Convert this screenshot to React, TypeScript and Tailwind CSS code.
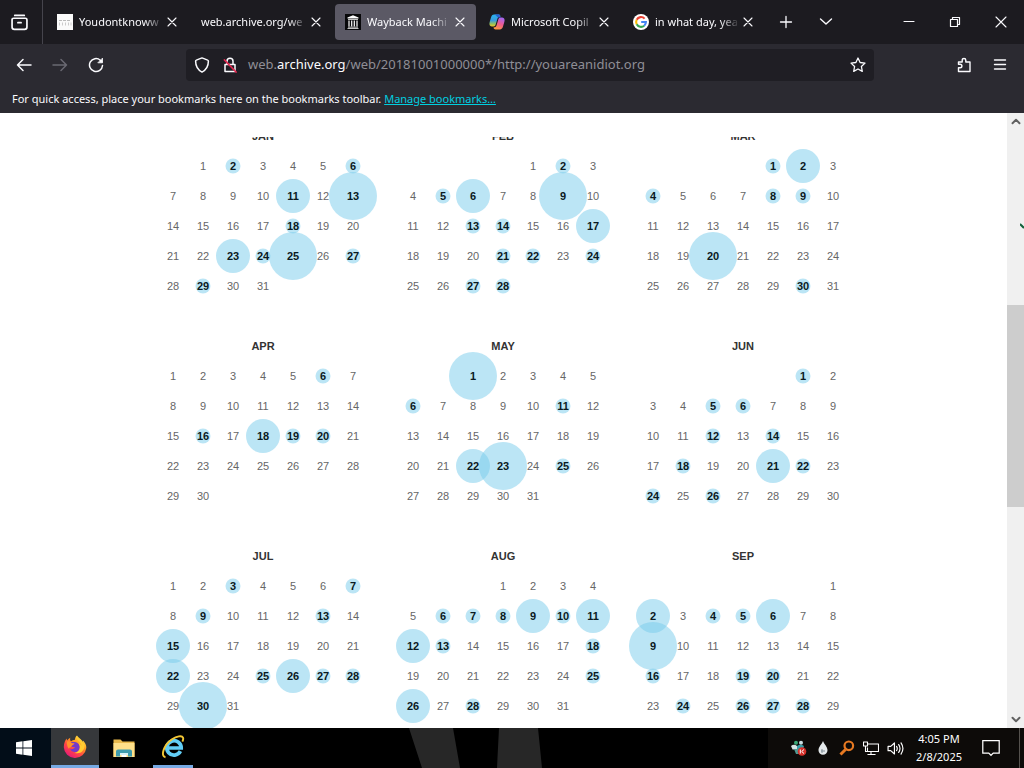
import React from "react";
import type { ReactNode } from "react";

type Size = "s" | "m" | "l";

interface Month {
  name: string;
  start: number;
  days: number;
  s: number[];
  m: number[];
  l: number[];
}

const months: Month[] = [
  { name: "JAN", start: 1, days: 31, s: [2, 6, 18, 24, 27, 29], m: [11, 23], l: [13, 25] },
  { name: "FEB", start: 4, days: 28, s: [2, 5, 13, 14, 21, 22, 24, 27, 28], m: [6, 17], l: [9] },
  { name: "MAR", start: 4, days: 31, s: [1, 4, 8, 9, 30], m: [2], l: [20] },
  { name: "APR", start: 0, days: 30, s: [6, 16, 19, 20], m: [18], l: [] },
  { name: "MAY", start: 2, days: 31, s: [6, 11, 25], m: [22], l: [1, 23] },
  { name: "JUN", start: 5, days: 30, s: [1, 5, 6, 12, 14, 18, 22, 24, 26], m: [21], l: [] },
  { name: "JUL", start: 0, days: 31, s: [3, 7, 9, 13, 25, 27, 28], m: [15, 22, 26], l: [30] },
  { name: "AUG", start: 3, days: 31, s: [6, 7, 8, 10, 13, 18, 25, 28], m: [9, 11, 12, 26], l: [] },
  { name: "SEP", start: 6, days: 30, s: [4, 5, 16, 19, 20, 24, 26, 27, 28], m: [2, 6], l: [9] },
];

const circle: Record<Size, string> = {
  s: "size-[15px]",
  m: "size-[34px]",
  l: "size-12",
};

function Day({ day, size }: { day: number; size?: Size }) {
  if (!size) return <span className="relative z-0">{day}</span>;
  return (
    <a href={"#" + day} className="flex h-[30px] items-center justify-center font-bold text-[#0a1a22]">
      <span
        className={
          "pointer-events-none absolute top-1/2 left-1/2 -translate-x-1/2 -translate-y-1/2 rounded-full bg-[#77ccec]/50 " +
          circle[size]
        }
      />
      <span className="relative z-10">{day}</span>
    </a>
  );
}

function MonthTable({ month }: { month: Month }) {
  const weeks = Math.ceil((month.start + month.days) / 7);
  const sizeOf = (d: number): Size | undefined =>
    month.l.includes(d) ? "l" : month.m.includes(d) ? "m" : month.s.includes(d) ? "s" : undefined;
  return (
    <table className="w-[210px] table-fixed border-collapse self-start text-center text-[11px] text-[#666]">
      <caption className="h-[30px] text-[11px] leading-[30px] font-bold text-[#333]">{month.name}</caption>
      <tbody>
        {Array.from({ length: weeks }, (_, w) => (
          <tr key={w}>
            {Array.from({ length: 7 }, (_, c) => {
              const d = w * 7 + c - month.start + 1;
              return (
                <td key={c} className="relative h-[30px] p-0 align-middle leading-4">
                  {d > 0 && d <= month.days && <Day day={d} size={sizeOf(d)} />}
                </td>
              );
            })}
          </tr>
        ))}
      </tbody>
    </table>
  );
}

function Line({ children, className = "size-4", width = 1.3 }: { children: ReactNode; className?: string; width?: number }) {
  return (
    <svg viewBox="0 0 16 16" className={className} fill="none" stroke="currentColor" strokeWidth={width} strokeLinecap="round" strokeLinejoin="round" aria-hidden="true">
      {children}
    </svg>
  );
}

const PageIcon = () => (
  <svg viewBox="0 0 16 16" className="size-4 shrink-0" aria-hidden="true">
    <rect width="16" height="16" fill="#fbfbfb" />
    <path d="M2 6.500h12" stroke="#bbb" strokeDasharray="3 1" />
    <path d="M2.500 8.500v3M5.500 8.500v3M8.500 8.500v3M11.500 8.500v3M14 8.500v3" stroke="#ccc" />
  </svg>
);

const ArchiveIcon = () => (
  <svg viewBox="0 0 16 16" className="size-4 shrink-0" aria-hidden="true">
    <rect width="16" height="16" fill="#08080a" />
    <path d="M8 1.200 13.500 3.600v1h-11v-1zM3 5.200h10v.8H3zM3 12.800h10v.8H3zM2.500 14.200h11v.8h-11z" fill="#fff" />
    <path d="M4 6.500v6M6.700 6.500v6M9.300 6.500v6M12 6.500v6" stroke="#fff" strokeWidth="1.200" />
  </svg>
);

const CopilotIcon = () => (
  <svg viewBox="0 0 16 16" className="size-4 shrink-0" aria-hidden="true">
    <defs>
      <linearGradient id="cpl" x1="0" y1="0" x2="0" y2="1">
        <stop offset="0" stopColor="#28b3ee" />
        <stop offset=".5" stopColor="#3b9bdc" />
        <stop offset=".8" stopColor="#9ac455" />
        <stop offset="1" stopColor="#f5c32c" />
      </linearGradient>
      <linearGradient id="cpr" x1=".7" y1="0" x2=".3" y2="1">
        <stop offset="0" stopColor="#a267f2" />
        <stop offset=".5" stopColor="#ee5a91" />
        <stop offset="1" stopColor="#ff9a3d" />
      </linearGradient>
    </defs>
    <path d="M11.500 2.500C11.200 1 10.400.6 9.500.6H5.200C3.400.6 2.500 1.700 2 3.500L.7 8c-.8 2.900.2 4.500 2.300 4.500h1.500c1.200 0 1.900-.8 2.200-2L8.500 4.500c.4-1.300 1.300-2 3-2z" fill="url(#cpl)" />
    <path d="M4.500 13.500c.3 1.500 1.100 1.900 2 1.900h4.300c1.800 0 2.700-1.100 3.200-2.900L15.300 8c.8-2.900-.2-4.500-2.300-4.500h-1.500c-1.200 0-1.900.8-2.200 2l-1.800 6c-.4 1.300-1.300 2-3 2z" fill="url(#cpr)" />
    <path d="M5.500.6h4c.9 0 1.700.4 2 2.900H9.600C8 3.500 7.400 1.500 5.500.6z" fill="#2a5fd0" />
  </svg>
);

const GoogleIcon = () => (
  <svg viewBox="0 0 16 16" className="size-4 shrink-0" aria-hidden="true">
    <circle cx="8" cy="8" r="8" fill="#fff" />
    <g fill="none" strokeWidth="2.100">
      <path d="M11.600 4.600A4.900 4.900 0 0 0 3.700 5.700" stroke="#ea4335" />
      <path d="M3.700 5.700a4.900 4.900 0 0 0 0 4.600" stroke="#fbbc05" />
      <path d="M3.700 10.300a4.900 4.900 0 0 0 7.500 1.400" stroke="#34a853" />
      <path d="M11.200 11.700A4.900 4.900 0 0 0 12.900 8H8.200" stroke="#4285f4" />
    </g>
  </svg>
);

const tabs: { title: string; icon?: ReactNode; active?: boolean }[] = [
  { title: "Youdontknoww", icon: <PageIcon /> },
  { title: "web.archive.org/we" },
  { title: "Wayback Machi", icon: <ArchiveIcon />, active: true },
  { title: "Microsoft Copil", icon: <CopilotIcon /> },
  { title: "in what day, yea", icon: <GoogleIcon /> },
];

function TabBar() {
  return (
    <header className="flex h-11 shrink-0 items-center bg-[#1c1b20] text-[#fbfbfe]">
      <button aria-label="Firefox View" className="flex h-full w-[43px] shrink-0 items-center justify-center border-r border-[#45444c] pr-1">
        <Line className="size-[17px]" width={1.600}>
          <path d="M3.500 1.300h9M2.500 4h11a1.500 1.500 0 0 1 1.500 1.500v6.800a2.200 2.200 0 0 1-2.200 2.200H3.200A2.200 2.200 0 0 1 1 12.300V5.500A1.500 1.500 0 0 1 2.500 4zM6.500 8.200h3" />
        </Line>
      </button>
      <div role="tablist" className="flex gap-[3px] pl-1">
        {tabs.map((t) => (
          <div
            key={t.title}
            className={"flex h-9 w-[141px] items-center rounded-sm pr-2 pl-2.5 " + (t.active ? "bg-[#5b5965]" : "")}
          >
            <button role="tab" aria-selected={!!t.active} className="flex min-w-0 flex-1 items-center gap-1.5 text-[11px]">
              {t.icon}
              <span className="min-w-0 flex-1 text-left whitespace-nowrap [mask-image:linear-gradient(to_left,transparent,black_20px)]">
                {t.title}
              </span>
            </button>
            <button aria-label={"Close " + t.title} className="shrink-0">
              <Line width={1.100}>
                <path d="m4 4 8 8M12 4l-8 8" />
              </Line>
            </button>
          </div>
        ))}
      </div>
      <button aria-label="New tab" className="ml-1 flex h-9 w-9 shrink-0 items-center justify-center">
        <Line width={1.300}>
          <path d="M8 2.500v11M2.500 8h11" />
        </Line>
      </button>
      <button aria-label="List all tabs" className="ml-1 flex h-9 w-9 shrink-0 items-center justify-center">
        <Line width={1.400}>
          <path d="m2.500 5 5.500 5 5.500-5" />
        </Line>
      </button>
      <div className="ml-auto flex h-full">
        <button aria-label="Minimize" className="flex w-[46px] items-center justify-center">
          <Line width={1.100}>
            <path d="M3 7.500h10" />
          </Line>
        </button>
        <button aria-label="Restore" className="flex w-[46px] items-center justify-center">
          <Line width={1.200}>
            <path d="M3.500 5.500h7v7h-7zM5.500 5.500v-2h7v7h-2" />
          </Line>
        </button>
        <button aria-label="Close window" className="flex w-[46px] items-center justify-center">
          <Line width={1.100}>
            <path d="m3 3 10 10M13 3 3 13" />
          </Line>
        </button>
      </div>
    </header>
  );
}

function NavBar() {
  return (
    <nav className="flex h-[41px] shrink-0 items-center bg-[#2b2a31] px-2 text-[#fbfbfe]">
      <button aria-label="Back" className="flex size-8 items-center justify-center">
        <Line width={1.500}>
          <path d="M15 8H1.500M7 2.500 1.500 8 7 13.500" />
        </Line>
      </button>
      <button aria-label="Forward" disabled className="ml-1 flex size-8 items-center justify-center text-[#6a6972]">
        <Line width={1.500}>
          <path d="M1 8h13.500M9 2.500 14.500 8 9 13.500" />
        </Line>
      </button>
      <button aria-label="Reload" className="ml-1 flex size-8 items-center justify-center">
        <Line width={1.500}>
          <path d="M14.500 8.500A6.500 6.500 0 1 1 12.300 3.200l1.500 1.500" />
          <path d="M14.500 1.500v4.300h-4.300z" fill="currentColor" strokeWidth=".8" />
        </Line>
      </button>
      <div className="mr-[78px] ml-[74px] flex h-8 flex-1 items-center rounded-sm bg-[#1f1e24] px-2">
        <button aria-label="Tracking protection">
          <Line width={1.500}>
            <path d="M8 .9 2.300 3.100a1 1 0 0 0-.7 1c0 5.200 2 8.800 6.400 11 4.400-2.200 6.400-5.800 6.400-11a1 1 0 0 0-.7-1z" />
          </Line>
        </button>
        <button aria-label="Connection not secure" className="ml-3">
          <Line width={1.500}>
            <path d="M3 7.500h10v7H3zM5 7.500V4.300a3 3 0 0 1 6 0v3.200" />
            <path d="m2.500 3 11.500 12" stroke="#e22850" strokeWidth="1.800" />
          </Line>
        </button>
        <div className="ml-2.5 flex-1 text-[13px] whitespace-nowrap text-[#8f8e96]">
          web.<span className="text-[#fbfbfe]">archive.org</span>/web/20181001000000*/http://youareanidiot.org
        </div>
        <button aria-label="Bookmark this page">
          <Line width={1.300}>
            <path d="m8 1 2.100 4.500 4.900.6-3.600 3.400.9 4.900L8 12l-4.300 2.400.9-4.900L1 6.100l4.900-.6z" />
          </Line>
        </button>
      </div>
      <button aria-label="Extensions" className="flex w-6 items-center justify-center">
        <Line width={1.400}>
          <path d="M2.500 5h3.700V3.300a1.800 1.800 0 0 1 3.600 0V5h4.200v9.500H2.500v-3.700h1.600a1.800 1.800 0 0 0 0-3.600H2.500z" />
        </Line>
      </button>
      <button aria-label="Menu" className="ml-2 flex size-8 items-center justify-center">
        <Line width={1.400}>
          <path d="M2.500 3h11M2.500 7.500h11M2.500 12h11" />
        </Line>
      </button>
    </nav>
  );
}

function ScrollBar() {
  return (
    <div className="relative flex w-[17px] shrink-0 flex-col bg-[#f0f0f0] text-[#606060]" aria-hidden="true">
      <Line className="mx-auto h-[17px] w-3.5" width={2.200}>
        <path d="m4 10 4-4 4 4" />
      </Line>
      <div className="grow-[175] basis-0" />
      <div className="grow-[202] basis-0 bg-[#cdcdcd]" />
      <div className="grow-[204] basis-0" />
      <Line className="mx-auto h-[17px] w-3.5" width={2.200}>
        <path d="m4 6 4 4 4-4" />
      </Line>
      <svg viewBox="0 0 4 6" className="absolute top-[110px] right-0 h-1.5 w-1">
        <path d="m0 1 4 4" stroke="#12603a" strokeWidth="2" />
      </svg>
    </div>
  );
}

const FirefoxIcon = () => (
  <svg viewBox="0 0 24 24" className="size-6" aria-hidden="true">
    <defs>
      <linearGradient id="ff" x1=".85" y1=".05" x2=".2" y2=".95">
        <stop offset="0" stopColor="#fff44f" />
        <stop offset=".35" stopColor="#ff9a1f" />
        <stop offset=".65" stopColor="#ff4545" />
        <stop offset="1" stopColor="#e6187a" />
      </linearGradient>
    </defs>
    <path d="M22.500 9c-.6-1.500-1.800-3-2.800-3.500.4 1 .5 1.800.5 2.300C18.800 4 15.500 3 14 .5c-1.700 1.300-2 3-2 4.200-1.600.1-3 .7-4 1.600C6.800 5.300 7 3.400 7.300 2.700 5.500 3.500 4.700 4.800 4.100 5.500c-.3-.4-.4-1.300-.3-2C2.400 4.900.8 8 .8 12.200A11.300 11.300 0 0 0 23.300 13c.1-1.400-.2-2.800-.8-4z" fill="url(#ff)" />
    <path d="M7.500 7.500c2-.6 5.500-.8 7.600 1 2.600 2.300 2.200 6.400-.5 8-2.700 1.500-6.700.3-7.400-2.700 2.200 1 3.800-.4 4.900-1.200-.8-.7-3.200-.2-4.900-1.300-.8-.7-.7-2.700.3-3.800z" fill="#7339c9" />
    <path d="M4 6.500c1.800-.6 3.700.2 4.300 1.200.8.5 2 .5 3.200.6-.3 1.500-2.600 1.700-2.900 3-.4 1.700-2.200.7-2.900 2.500C4 11.500 3.600 8.500 4 6.500z" fill="#ff922a" />
    <path d="M14 1c-1.500 3.500 3.900 5 4.500 10-.7-1.700-2-2.500-3-3 3 4.500.5 9.500-4 9.800 5.500 2 10.500-2 10-8C20 5.500 16 4.500 14 1z" fill="#ffcb32" />
  </svg>
);

const FolderIcon = () => (
  <svg viewBox="0 0 24 24" className="size-6" aria-hidden="true">
    <path d="M1.500 3.500h7l2 2h12V21h-21z" fill="#e9b94c" />
    <path d="M1.500 7h21v14h-21z" fill="#ffe08a" />
    <path d="M4 20.500v-5a2 2 0 0 1 2-2h12a2 2 0 0 1 2 2v5h-4V17H8v3.500z" fill="#3f9cae" />
    <path d="M8 17h8v2H8z" fill="#d5f0f6" />
    <path d="M9.500 19h5v2h-5z" fill="#fff" />
  </svg>
);

const ExplorerIcon = () => (
  <svg viewBox="0 0 24 24" className="size-6" aria-hidden="true">
    <path d="M19.400 16.200A7.200 7.200 0 1 1 20.200 13H7" fill="none" stroke="#62cdf5" strokeWidth="3.700" />
    <path d="M4.500 22.300C-.8 21.500 2.500 10 11 4.300c4.700-3.200 10-4.200 11-1.700.5 1.200.1 2.600-.6 4" fill="none" stroke="#f3c735" strokeWidth="1.900" />
  </svg>
);

function TaskBar() {
  return (
    <footer className="relative flex h-10 shrink-0 items-stretch overflow-hidden bg-black text-white">
      <svg viewBox="0 0 150 40" className="absolute top-0 left-[404px] h-10 w-[150px]" aria-hidden="true">
        <path d="M5 0h44l7 40H18zM95 0h39l4 40H93z" fill="#272727" />
      </svg>
      <button aria-label="Start" className="flex w-[51px] items-center justify-center bg-[#020d18] pr-1">
        <svg viewBox="0 0 16 16" className="size-4" fill="#fff" aria-hidden="true">
          <path d="M0 2.200 6.500 1.300v6.300H0zM7.300 1.200 16 0v7.600H7.300zM0 8.400h6.500v6.300L0 13.800zM7.300 8.400H16V16l-8.700-1.200z" />
        </svg>
      </button>
      <button aria-label="Firefox" className="flex w-12 items-center justify-center border-b-[3px] border-[#76a9e3] bg-[#36383b]">
        <FirefoxIcon />
      </button>
      <button aria-label="File Explorer" className="flex w-[50px] items-center justify-center">
        <FolderIcon />
      </button>
      <button aria-label="Internet Explorer" className="ml-1 flex w-10 items-center justify-center border-b-[3px] border-[#76a9e3]">
        <ExplorerIcon />
      </button>
      <div className="ml-auto flex items-center bg-[#0d0b09] pl-[23px]">
        <div className="flex items-center gap-2">
          <svg viewBox="0 0 16 16" className="size-4" aria-hidden="true">
            <circle cx="5" cy="2.800" r="2" fill="#3aa877" />
            <circle cx="10" cy="2.800" r="2" fill="#c9dfe3" />
            <path d="M0 6q3-2.500 6 0v3.500H1.500z" fill="#d7e5e4" />
            <path d="M6 6q3.500-2.500 7 0l-1 3.500H6z" fill="#379ea7" />
            <path d="M3 9h5v5H5z" fill="#4e9a94" />
            <circle cx="11" cy="11.500" r="4.300" fill="#d5302a" />
            <path d="M9.300 9.500v4M13 9.500l-2.300 2 2.300 2" stroke="#fff" fill="none" />
          </svg>
          <svg viewBox="0 0 16 16" className="size-4" aria-hidden="true">
            <path d="M8 1c1.300 3.500 4.500 5.700 4.500 9.200a4.500 4.500 0 0 1-9 0C3.500 6.700 6.700 4.500 8 1z" fill="#e4e9eb" />
            <path d="M6 11h4M7 9v4" stroke="#829098" />
          </svg>
          <svg viewBox="0 0 16 16" className="size-4" fill="none" stroke="#e87a22" aria-hidden="true">
            <circle cx="9.800" cy="5.800" r="4.300" strokeWidth="2.200" />
            <path d="M6.500 9.500 1.500 14.500" strokeWidth="3" />
          </svg>
          <Line width={1.100}>
            <path d="M5.500 4h10v7.500h-11V8M8 11.500v3M5 14.500h7M.5 2h4v4h-4zM2.500 6v5.500h2" strokeLinecap="square" />
          </Line>
          <Line className="size-[17px]" width={1.100}>
            <path d="M1 6h2.500L7 2.800v10.400L3.500 10H1zM9 6q1.300 2 0 4M11 4.300q2.500 3.700 0 7.400M13.200 2.700q3.600 5.300 0 10.600" />
          </Line>
        </div>
        <div className="ml-2 flex w-[54px] flex-col items-center text-[11px] leading-[18px] whitespace-nowrap">
          <time>4:05 PM</time>
          <time>2/8/2025</time>
        </div>
        <button aria-label="Notifications" className="ml-3 flex h-full items-center px-1">
          <Line className="size-[18px]" width={1.100}>
            <path d="M.7 1.500h14.600v11H10l-2 2-2-2H.7z" strokeLinejoin="miter" />
          </Line>
        </button>
        <div className="ml-[15px] h-full w-[5px] border-l border-[#55524e]" />
      </div>
    </footer>
  );
}

export default function App() {
  return (
    <div className="flex h-screen flex-col overflow-hidden bg-white font-['Noto_Sans','Open_Sans',sans-serif]">
      <TabBar />
      <NavBar />
      <div className="h-7 shrink-0 bg-[#2b2a31] px-3 text-[11px] leading-7 text-[#fbfbfe]">
        For quick access, place your bookmarks here on the bookmarks toolbar.{" "}
        <a href="#bookmarks" className="text-[#00cfe0] underline">
          Manage bookmarks…
        </a>
      </div>
      <div className="flex min-h-0 flex-1">
        <main className="flex min-w-0 flex-1 flex-col bg-white pt-6 pr-px font-['Liberation_Sans',Arial,sans-serif]">
          <div className="min-h-0 flex-1 overflow-hidden">
            <div className="-mt-4 grid grid-cols-[repeat(3,210px)] justify-center gap-[30px]">
              {months.map((m) => (
                <MonthTable key={m.name} month={m} />
              ))}
            </div>
          </div>
        </main>
        <ScrollBar />
      </div>
      <TaskBar />
    </div>
  );
}
